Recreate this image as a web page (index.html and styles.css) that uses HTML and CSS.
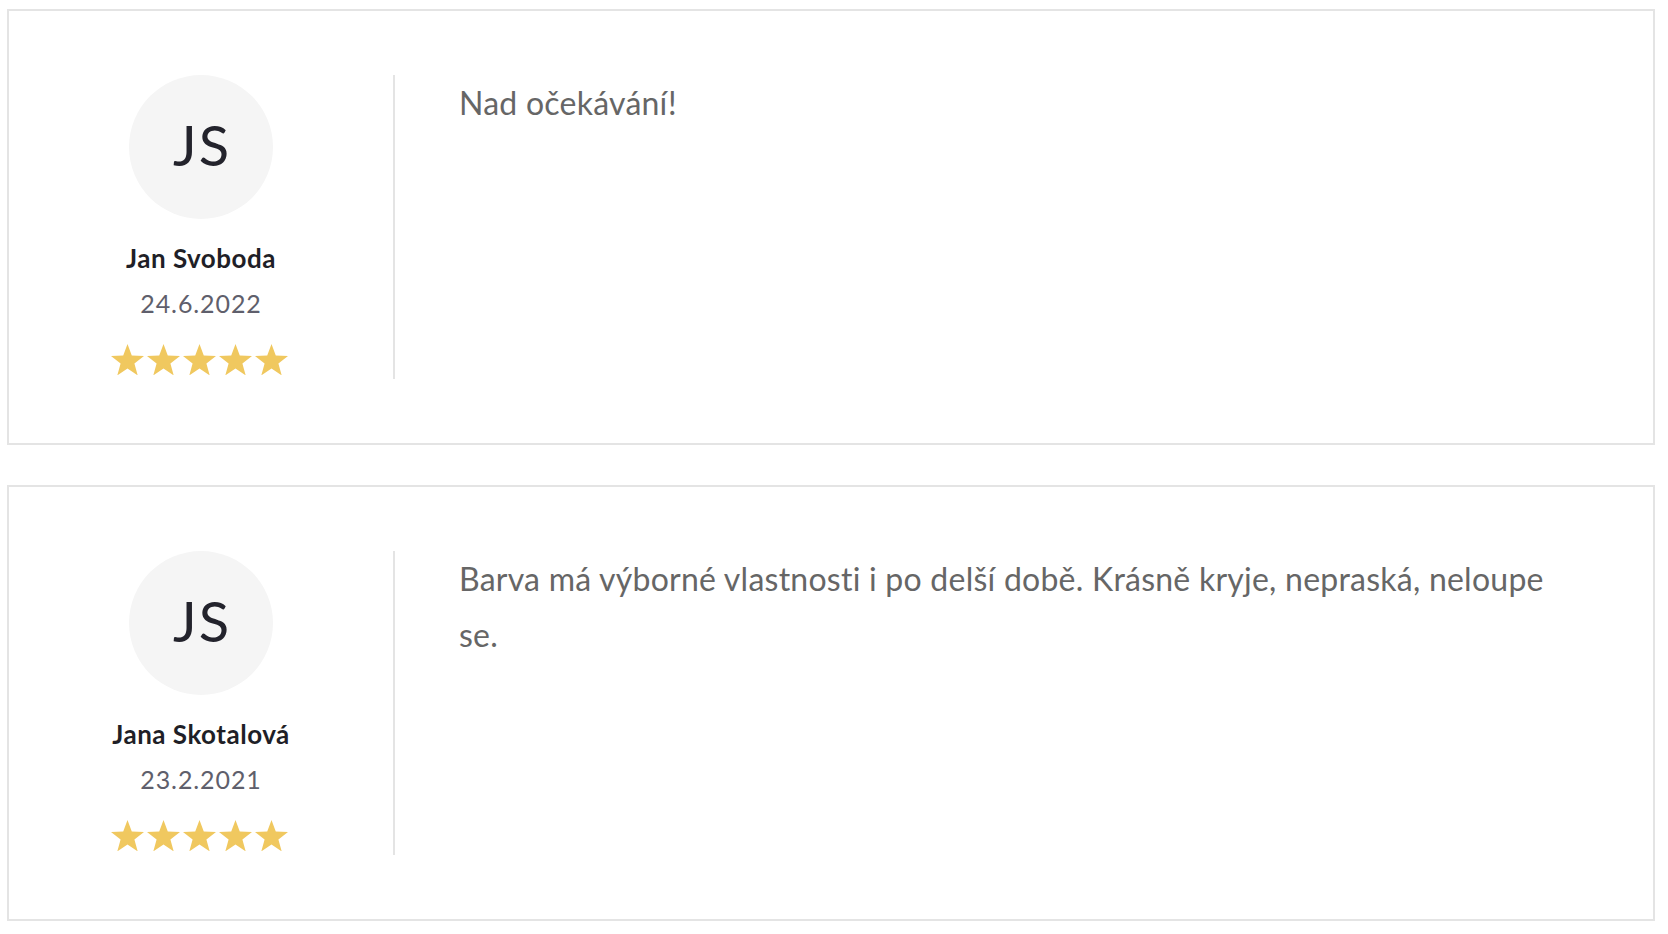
FILE: index.html
```html
<!DOCTYPE html>
<html lang="cs">
<head>
<meta charset="utf-8">
<title>Recenze</title>
<link rel="stylesheet" href="styles.css">
</head>
<body>
<div class="reviews">
  <article class="review">
    <div class="review-author">
      <div class="avatar">JS</div>
      <div class="author-name">Jan Svoboda</div>
      <div class="review-date">24.6.2022</div>
      <div class="stars">
        <svg class="star" viewBox="0 0 100 95.1"><polygon points="50,0 62.93,34.77 100,36.33 70.92,59.37 80.9,95.1 50,74.57 19.1,95.1 29.08,59.37 0,36.33 37.07,34.77"/></svg>
        <svg class="star" viewBox="0 0 100 95.1"><polygon points="50,0 62.93,34.77 100,36.33 70.92,59.37 80.9,95.1 50,74.57 19.1,95.1 29.08,59.37 0,36.33 37.07,34.77"/></svg>
        <svg class="star" viewBox="0 0 100 95.1"><polygon points="50,0 62.93,34.77 100,36.33 70.92,59.37 80.9,95.1 50,74.57 19.1,95.1 29.08,59.37 0,36.33 37.07,34.77"/></svg>
        <svg class="star" viewBox="0 0 100 95.1"><polygon points="50,0 62.93,34.77 100,36.33 70.92,59.37 80.9,95.1 50,74.57 19.1,95.1 29.08,59.37 0,36.33 37.07,34.77"/></svg>
        <svg class="star" viewBox="0 0 100 95.1"><polygon points="50,0 62.93,34.77 100,36.33 70.92,59.37 80.9,95.1 50,74.57 19.1,95.1 29.08,59.37 0,36.33 37.07,34.77"/></svg>
      </div>
    </div>
    <div class="review-body">
      <p class="review-text">Nad očekávání!</p>
    </div>
  </article>
  <article class="review">
    <div class="review-author">
      <div class="avatar">JS</div>
      <div class="author-name">Jana Skotalová</div>
      <div class="review-date">23.2.2021</div>
      <div class="stars">
        <svg class="star" viewBox="0 0 100 95.1"><polygon points="50,0 62.93,34.77 100,36.33 70.92,59.37 80.9,95.1 50,74.57 19.1,95.1 29.08,59.37 0,36.33 37.07,34.77"/></svg>
        <svg class="star" viewBox="0 0 100 95.1"><polygon points="50,0 62.93,34.77 100,36.33 70.92,59.37 80.9,95.1 50,74.57 19.1,95.1 29.08,59.37 0,36.33 37.07,34.77"/></svg>
        <svg class="star" viewBox="0 0 100 95.1"><polygon points="50,0 62.93,34.77 100,36.33 70.92,59.37 80.9,95.1 50,74.57 19.1,95.1 29.08,59.37 0,36.33 37.07,34.77"/></svg>
        <svg class="star" viewBox="0 0 100 95.1"><polygon points="50,0 62.93,34.77 100,36.33 70.92,59.37 80.9,95.1 50,74.57 19.1,95.1 29.08,59.37 0,36.33 37.07,34.77"/></svg>
        <svg class="star" viewBox="0 0 100 95.1"><polygon points="50,0 62.93,34.77 100,36.33 70.92,59.37 80.9,95.1 50,74.57 19.1,95.1 29.08,59.37 0,36.33 37.07,34.77"/></svg>
      </div>
    </div>
    <div class="review-body">
      <p class="review-text">Barva má výborné vlastnosti i po delší době. Krásně kryje, nepraská, neloupe se.</p>
    </div>
  </article>
</div>
</body>
</html>
```

FILE: styles.css
```css
html, body {
  margin: 0;
  padding: 0;
  background: #ffffff;
}

body {
  font-family: "Lato", "Noto Sans", sans-serif;
}

.reviews {
  display: flex;
  flex-direction: column;
  gap: 40px;
  padding: 9px 13px 0 7px;
}

.review {
  display: flex;
  border: 2px solid #e4e4e4;
  padding: 64px 64px 64px 0;
  background: #ffffff;
  height: 304px;
}

.review-author {
  width: 384px;
  flex: 0 0 384px;
  display: flex;
  flex-direction: column;
  align-items: center;
}

.avatar {
  width: 144px;
  height: 144px;
  border-radius: 50%;
  background: #f5f5f5;
  color: #23232c;
  font-size: 56px;
  line-height: 140px;
  text-align: center;
  letter-spacing: 2px;
  text-indent: 2px;
}

.author-name {
  margin-top: 26px;
  font-size: 26px;
  line-height: 26px;
  font-weight: 700;
  letter-spacing: 0.5px;
  color: #1f1f27;
}

.review-date {
  margin-top: 20px;
  font-size: 25px;
  line-height: 25px;
  letter-spacing: 0.9px;
  color: #5f5f6c;
}

.stars {
  margin-top: 28px;
  margin-right: 4px;
  display: flex;
  gap: 3px;
}

.star {
  width: 33px;
  height: 31.4px;
  fill: #f0c85f;
  display: block;
}

.review-body {
  flex: 1;
  border-left: 2px solid #e4e4e4;
  padding-left: 64px;
  padding-right: 28px;
}

.review-text {
  margin: 0;
  font-size: 32px;
  line-height: 56px;
  letter-spacing: 0.24px;
  color: #666666;
}
```
